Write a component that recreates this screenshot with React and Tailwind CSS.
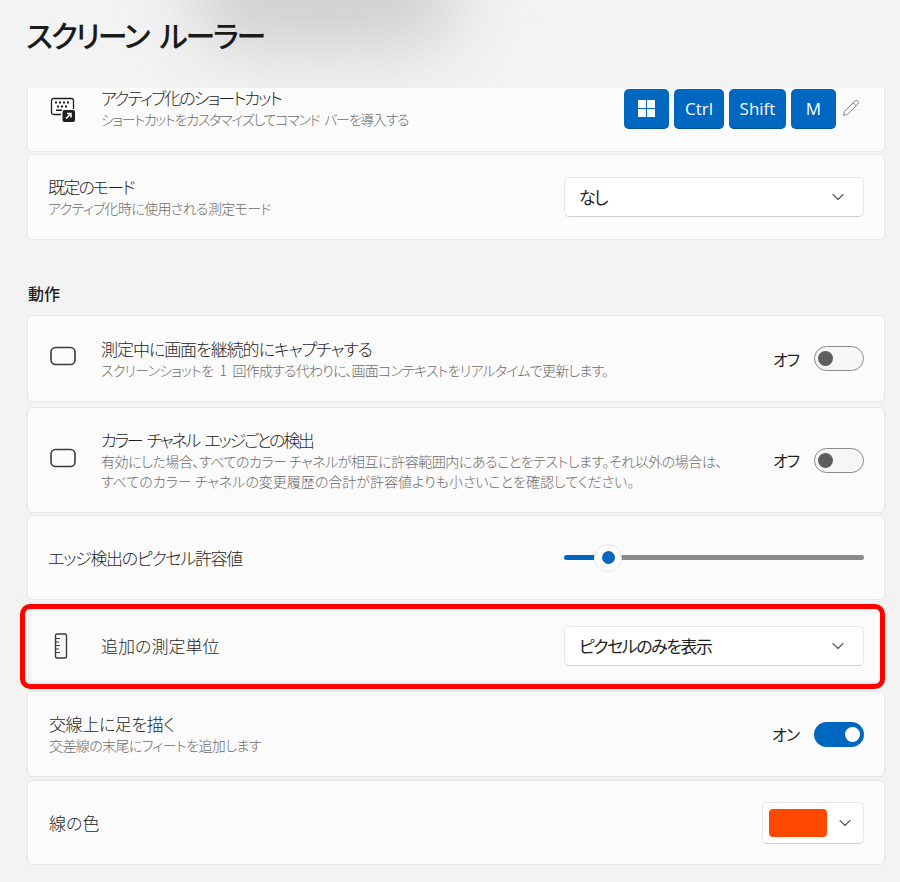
import { ChevronDown, Pencil } from "lucide-react";

const jp = "font-['Noto_Sans_CJK_JP','Noto_Sans',sans-serif] [font-feature-settings:'palt']";

function KeyboardIcon() {
  return (
    <svg width="26" height="26" viewBox="0 0 26 26" fill="none">
      <path d="M11 18.5H3.5a2 2 0 0 1-2-2v-12a2 2 0 0 1 2-2h18a2 2 0 0 1 2 2V13" stroke="#1f1f1f" strokeWidth="1.3" />
      <g fill="#1f1f1f">
        <rect x="5" y="5.5" width="2" height="2" />
        <rect x="9" y="5.5" width="2" height="2" />
        <rect x="13" y="5.5" width="2" height="2" />
        <rect x="17" y="5.5" width="2" height="2" />
        <rect x="7" y="9.5" width="2" height="2" />
        <rect x="11" y="9.5" width="2" height="2" />
        <rect x="15" y="9.5" width="2" height="2" />
        <rect x="6" y="13.5" width="6" height="1.5" />
      </g>
      <rect x="12.5" y="14" width="12.5" height="12" rx="2" fill="#1f1f1f" />
      <path d="M16 22.5l5-5M17 17.5h4v4" stroke="#fff" strokeWidth="1.5" />
    </svg>
  );
}

function RulerIcon() {
  return (
    <svg width="14" height="26" viewBox="0 0 14 26" fill="none">
      <rect x="1.5" y="1" width="11" height="24" rx="1.5" stroke="#3a3a3a" strokeWidth="1.4" />
      <path d="M2 5.5h4M2 9h3M2 12.5h4M2 16h3M2 19.5h4" stroke="#3a3a3a" strokeWidth="1.2" />
    </svg>
  );
}

function RectIcon() {
  return (
    <svg width="26" height="20" viewBox="0 0 26 20" fill="none">
      <rect x="1" y="1.5" width="24" height="17" rx="4.5" stroke="#3a3a3a" strokeWidth="1.6" />
    </svg>
  );
}

function WinLogo() {
  return (
    <div className="grid grid-cols-2 gap-px w-[17px] h-[17px]">
      <div className="bg-white" />
      <div className="bg-white" />
      <div className="bg-white" />
      <div className="bg-white" />
    </div>
  );
}

function Key({ children, w }) {
  return (
    <div className={`${w} h-10 rounded-[5px] bg-[#0067c0] border-b border-[#00509a] text-white text-[17px] flex items-center justify-center font-['Open_Sans',sans-serif]`}>
      {children}
    </div>
  );
}

function Select({ label }) {
  return (
    <div className="w-[300px] h-10 bg-white rounded-[5px] border border-[#e8e8e8] border-b-[#cfcfcf] flex items-center justify-between pl-[14px] pr-[15px] text-[17px] tracking-[-1.5px] text-[#1f1f1f]">
      <span>{label}</span>
      <ChevronDown size={20} strokeWidth={1.4} color="#5d5d5d" />
    </div>
  );
}

function Toggle({ on }) {
  return (
    <div className="flex items-center gap-[15px]">
      <span className="text-[16px] tracking-[-1px] text-[#1f1f1f]">{on ? "オン" : "オフ"}</span>
      {on ? (
        <div className="w-[50px] h-[25px] rounded-full bg-[#0067c0] flex items-center justify-end pr-[4px]">
          <div className="w-[15px] h-[15px] rounded-full bg-white" />
        </div>
      ) : (
        <div className="w-[50px] h-[25px] rounded-full bg-[#f6f6f6] border border-[#8a8a8a] flex items-center pl-[3px]">
          <div className="w-[15px] h-[15px] rounded-full bg-[#5d5d5d]" />
        </div>
      )}
    </div>
  );
}

function Card({ className = "", children }) {
  return (
    <div className={`w-[858px] bg-[#fbfbfb] border border-[#e6e6e6] rounded-[5px] ${className}`}>
      {children}
    </div>
  );
}

function Title({ className = "", children }) {
  return <div className={`text-[17px] leading-[22px] text-[#1f1f1f] font-light ${className}`}>{children}</div>;
}

function Desc({ className = "", children }) {
  return <div className={`text-[14px] leading-[20px] text-[#6b6b6b] font-light ${className}`}>{children}</div>;
}

export default function App() {
  return (
    <div className={`relative w-[900px] h-[882px] overflow-hidden bg-[#f3f3f3] ${jp}`}>
      {/* header sits above the scrolled list, first card slides under it */}
      <div className="relative z-10 h-[88px] pl-[26px] pt-[9px] bg-[#f3f3f3] overflow-hidden">
        <div className="absolute left-[190px] -top-[70px] w-[270px] h-[120px] bg-[#cfcfcf] blur-[35px] rounded-full" />
        <h1 className="relative text-[30px] leading-[50px] font-medium tracking-[-2.2px] [word-spacing:7px] text-[#1a1a1a]">スクリーン ルーラー</h1>
      </div>

      <div className="pl-[27px]">
        <Card className="-mt-[20px] h-[84px] pl-[22px] pr-[24px] pt-[20px] flex items-start">
          <div className="w-[51px] pt-[7px]"><KeyboardIcon /></div>
          <div className="flex-1 -mt-[1px]">
            <Title className="tracking-[-1.9px] leading-[20px]!">アクティブ化のショートカット</Title>
            <Desc className="tracking-[-1.3px] [word-spacing:3px] mt-[1px]">ショートカットをカスタマイズしてコマンド バーを導入する</Desc>
          </div>
          <div className="relative z-20 flex items-start gap-[5px]">
            <Key w="w-[45px]"><WinLogo /></Key>
            <Key w="w-[50px]">Ctrl</Key>
            <Key w="w-[57px]">Shift</Key>
            <Key w="w-[45px]">M</Key>
            <Pencil size={18} strokeWidth={1.1} color="#6b6b6b" className="ml-[1px] mt-[10px]" />
          </div>
        </Card>

        <Card className="mt-[2px] h-[86px] pl-[20px] pr-[20px] flex items-center justify-between">
          <div>
            <Title className="tracking-[-1.8px]">既定のモード</Title>
            <Desc className="tracking-[-0.65px]">アクティブ化時に使用される測定モード</Desc>
          </div>
          <Select label="なし" />
        </Card>

        <h2 className="mt-[42px] mb-[10px] pl-[1px] h-[23px] text-[16px] leading-[23px] font-medium text-[#1f1f1f]">動作</h2>

        <Card className="h-[87px] pl-[22px] pr-[20px] flex items-center">
          <div className="w-[51px] -mt-[6px]"><RectIcon /></div>
          <div className="flex-1">
            <Title className="tracking-[-1.05px]">測定中に画面を継続的にキャプチャする</Title>
            <Desc className="tracking-[-0.8px] [word-spacing:4px]">スクリーンショットを 1 回作成する代わりに、画面コンテキストをリアルタイムで更新します。</Desc>
          </div>
          <Toggle />
        </Card>

        <Card className="mt-[5px] h-[106px] pl-[22px] pr-[20px] flex items-center">
          <div className="w-[51px] -mt-[5px]"><RectIcon /></div>
          <div className="flex-1">
            <Title className="tracking-[-2.3px] [word-spacing:4px]">カラー チャネル エッジごとの検出</Title>
            <Desc className="tracking-[-0.46px]">
              有効にした場合、すべてのカラー チャネルが相互に許容範囲内にあることをテストします。それ以外の場合は、
              <br />
              <span className="tracking-normal">すべてのカラー チャネルの変更履歴の合計が許容値よりも小さいことを確認してください。</span>
            </Desc>
          </div>
          <Toggle />
        </Card>

        <Card className="mt-[2px] h-[85px] pl-[20px] pr-[20px] flex items-center justify-between">
          <Title className="tracking-[-1.3px]">エッジ検出のピクセル許容値</Title>
          <div className="relative w-[300px] h-[28px] flex items-center">
            <div className="w-[30px] h-[5px] bg-[#0067c0] rounded-l-full" />
            <div className="flex-1 h-[5px] bg-[#8a8a8a] rounded-r-full" />
            <div className="absolute left-[30px] top-0 w-[28px] h-[28px] rounded-full bg-white border border-[#e8e8e8] flex items-center justify-center">
              <div className="w-[13px] h-[13px] rounded-full bg-[#0067c0]" />
            </div>
          </div>
        </Card>

        <div className="relative mt-[7px]">
          <Card className="h-[78px] pl-[26px] pr-[20px] flex items-center border-transparent shadow-[inset_0_0_6px_rgba(0,0,0,0.12)]">
            <div className="w-[47px]"><RulerIcon /></div>
            <div className="flex-1"><Title>追加の測定単位</Title></div>
            <Select label="ピクセルのみを表示" />
          </Card>
          <div className="absolute -left-[7px] -top-[3px] w-[865px] h-[85px] border-[5px] border-[#ff0000] rounded-[10px]" />
        </div>

        <Card className="mt-[6px] h-[86px] pl-[21px] pr-[20px] flex items-center justify-between">
          <div>
            <Title className="tracking-[-0.4px]">交線上に足を描く</Title>
            <Desc className="tracking-[-0.6px]">交差線の末尾にフィートを追加します</Desc>
          </div>
          <Toggle on />
        </Card>

        <Card className="mt-[3px] h-[85px] pl-[21px] pr-[20px] flex items-center justify-between">
          <Title>線の色</Title>
          <div className="w-[102px] h-[42px] bg-white rounded-[5px] border border-[#e8e8e8] border-b-[#cfcfcf] flex items-center pl-[6px]">
            <div className="w-[58px] h-[28px] rounded-[4px] bg-[#ff4800]" />
            <ChevronDown size={20} strokeWidth={1.4} color="#5d5d5d" className="ml-[8px]" />
          </div>
        </Card>
      </div>
    </div>
  );
}
